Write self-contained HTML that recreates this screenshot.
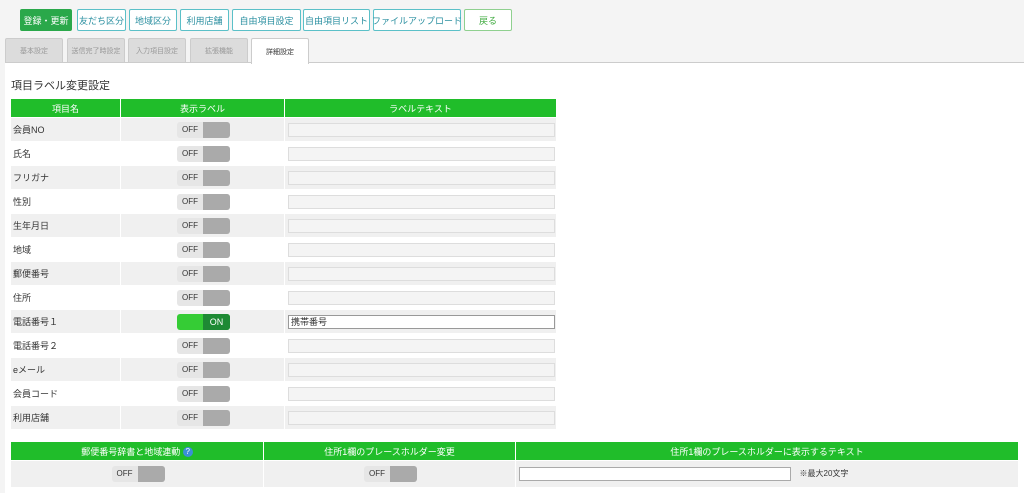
<!DOCTYPE html>
<html><head><meta charset="utf-8"><style>
*{box-sizing:border-box;margin:0;padding:0}
body{width:1024px;height:493px;overflow:hidden;background:#f4f4f4;font-family:"Liberation Sans","Noto Sans CJK JP",sans-serif;font-size:10px;color:#333;position:relative}
.btn{position:absolute;top:9px;height:22px;border:1px solid #5bc0c8;background:#fff;color:#2a8fa0;font-size:9px;display:flex;align-items:center;justify-content:center;border-radius:2px;white-space:nowrap}
.tab{position:absolute;top:38px;height:25px;background:#dcdcdc;border:1px solid #ccc;border-bottom:none;color:#999;font-size:7px;display:flex;align-items:center;justify-content:center;border-radius:2px 2px 0 0}
.panel{position:absolute;left:5px;top:62px;width:1019px;height:431px;background:#fff;border-top:1px solid #ccc}
table{border-collapse:collapse;position:absolute}
th{background:#20bd2a;color:#fff;font-weight:normal;font-size:9px;height:19px;border:1px solid #fff}
td{border:1px solid #fff;height:24px;font-size:9px;padding-left:2px}
tr.g td{background:#f0f0f0}
.tg{display:inline-block;width:53px;height:16px;border-radius:3px;background:#e6e6e6;position:relative;vertical-align:middle}
.tg span{position:absolute;left:5px;top:3px;font-size:8px;color:#333}
.tg i{position:absolute;right:0;top:0;width:27px;height:16px;background:#aaa;border-radius:0 3px 3px 0}
.on{background:#35cc35}.on i{background:#1e8a34;color:#fff;font-style:normal;font-size:9px;display:flex;align-items:center;justify-content:center}
.inp{display:block;width:267px;height:14px;border:1px solid #ddd;background:#f4f4f4;margin-left:1px}
</style></head><body>
<div class="btn" style="left:20px;width:52px;background:#2aa84a;border-color:#2aa84a;color:#fff">登録・更新</div>
<div class="btn" style="left:77px;width:49px">友だち区分</div>
<div class="btn" style="left:129px;width:48px">地域区分</div>
<div class="btn" style="left:180px;width:49px">利用店舗</div>
<div class="btn" style="left:232px;width:69px">自由項目設定</div>
<div class="btn" style="left:303px;width:67px">自由項目リスト</div>
<div class="btn" style="left:373px;width:88px">ファイルアップロード</div>
<div class="btn" style="left:464px;width:48px;border-color:#8fd08f;color:#3aa83a">戻る</div>
<div class="tab" style="left:5px;width:58px">基本設定</div>
<div class="tab" style="left:67px;width:58px">送信完了時設定</div>
<div class="tab" style="left:128px;width:58px">入力項目設定</div>
<div class="tab" style="left:190px;width:58px">拡張機能</div>
<div class="tab" style="left:251px;width:58px;background:#fff;color:#333;height:26px;z-index:2">詳細設定</div>
<div class="panel"></div>
<div style="position:absolute;left:11px;top:77px;font-size:11px">項目ラベル変更設定</div>
<table style="left:10px;top:98px;width:547px">
<tr><th style="width:110px">項目名</th><th style="width:164px">表示ラベル</th><th>ラベルテキスト</th></tr>
<tr class="g"><td>会員NO</td><td align=center><span class="tg"><span>OFF</span><i></i></span></td><td><span class="inp"></span></td></tr>
<tr><td>氏名</td><td align=center><span class="tg"><span>OFF</span><i></i></span></td><td><span class="inp"></span></td></tr>
<tr class="g"><td>フリガナ</td><td align=center><span class="tg"><span>OFF</span><i></i></span></td><td><span class="inp"></span></td></tr>
<tr><td>性別</td><td align=center><span class="tg"><span>OFF</span><i></i></span></td><td><span class="inp"></span></td></tr>
<tr class="g"><td>生年月日</td><td align=center><span class="tg"><span>OFF</span><i></i></span></td><td><span class="inp"></span></td></tr>
<tr><td>地域</td><td align=center><span class="tg"><span>OFF</span><i></i></span></td><td><span class="inp"></span></td></tr>
<tr class="g"><td>郵便番号</td><td align=center><span class="tg"><span>OFF</span><i></i></span></td><td><span class="inp"></span></td></tr>
<tr><td>住所</td><td align=center><span class="tg"><span>OFF</span><i></i></span></td><td><span class="inp"></span></td></tr>
<tr class="g"><td>電話番号１</td><td align=center><span class="tg on"><i>ON</i></span></td><td><span class="inp" style="background:#fff;border-color:#999;font-size:9px;padding-left:2px;line-height:12px">携帯番号</span></td></tr>
<tr><td>電話番号２</td><td align=center><span class="tg"><span>OFF</span><i></i></span></td><td><span class="inp"></span></td></tr>
<tr class="g"><td>eメール</td><td align=center><span class="tg"><span>OFF</span><i></i></span></td><td><span class="inp"></span></td></tr>
<tr><td>会員コード</td><td align=center><span class="tg"><span>OFF</span><i></i></span></td><td><span class="inp"></span></td></tr>
<tr class="g"><td>利用店舗</td><td align=center><span class="tg"><span>OFF</span><i></i></span></td><td><span class="inp"></span></td></tr>
</table>
<table style="left:10px;top:441px;width:1009px">
<tr><th style="width:253px">郵便番号辞書と地域連動 <span style="display:inline-block;width:10px;height:10px;border-radius:50%;background:#3a8fd8;font-size:8px;line-height:10px;text-align:center;vertical-align:middle">?</span></th><th style="width:252px">住所1欄のプレースホルダー変更</th><th>住所1欄のプレースホルダーに表示するテキスト</th></tr>
<tr class="g"><td align=center style="height:27px"><span class="tg"><span>OFF</span><i></i></span></td><td align=center><span class="tg"><span>OFF</span><i></i></span></td><td><span class="inp" style="display:inline-block;width:272px;background:#fff;border-color:#aaa;vertical-align:middle"></span> <span style="font-size:8px;margin-left:6px">※最大20文字</span></td></tr>
</table>
</body></html>
